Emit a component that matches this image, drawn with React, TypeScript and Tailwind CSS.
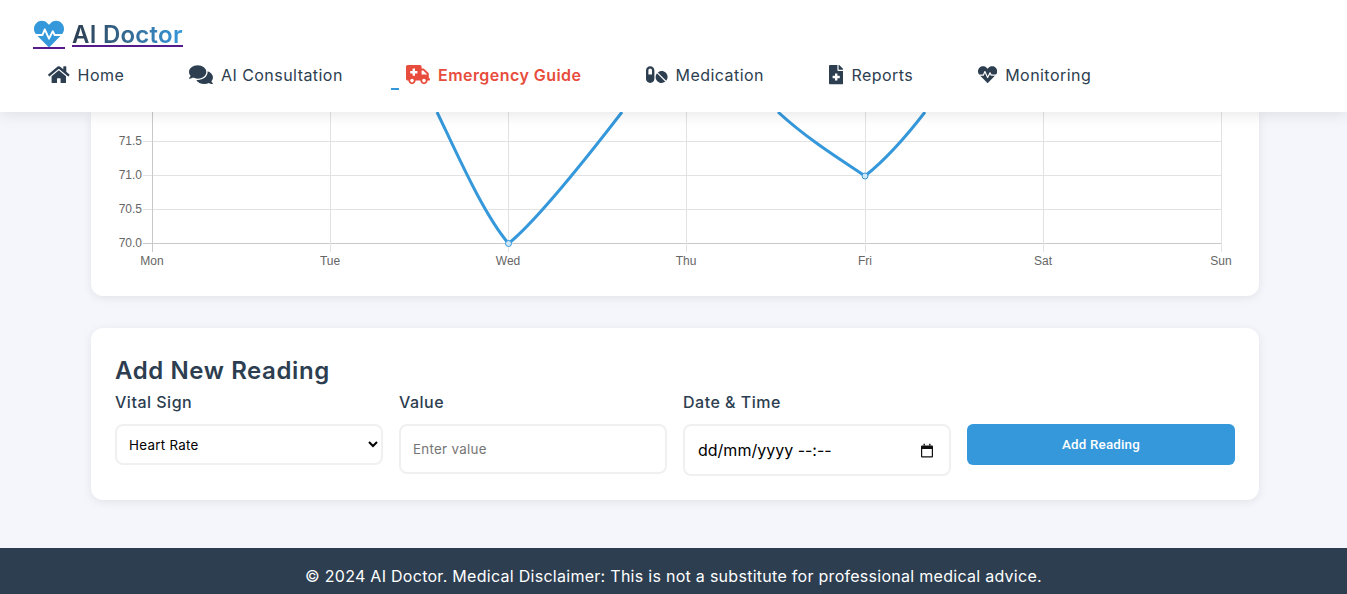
import { FaHome, FaComments, FaAmbulance, FaPills, FaFileMedical, FaHeartbeat } from "react-icons/fa";

const xs = [152.5, 330.5, 508.5, 686.5, 865.5, 1043.5, 1221.5];
const days = ["Mon", "Tue", "Wed", "Thu", "Fri", "Sat", "Sun"];
const ys = [
  { y: 141.5, l: "71.5" },
  { y: 175.5, l: "71.0" },
  { y: 209.5, l: "70.5" },
  { y: 243.5, l: "70.0" },
];

function Chart() {
  return (
    <svg width="1168" height="184" viewBox="91 112 1168 184" className="block">
      {ys.map((t) => (
        <g key={t.y}>
          <line x1="143" x2="1222" y1={t.y} y2={t.y} stroke={t.y === 243.5 ? "#c9c9c9" : "#e2e2e2"} />
          <text x="142" y={t.y + 3} textAnchor="end" fontSize="12" fill="#666" fontFamily="Liberation Sans, Arial, sans-serif">
            {t.l}
          </text>
        </g>
      ))}
      {xs.map((x, i) => (
        <g key={x}>
          <line x1={x} x2={x} y1="112" y2="252" stroke={i === 0 ? "#c9c9c9" : "#e2e2e2"} />
          <text x={Math.floor(x)} y="265" textAnchor="middle" fontSize="12" fill="#666" fontFamily="Liberation Sans, Arial, sans-serif">
            {days[i]}
          </text>
        </g>
      ))}
      <path
        d="M437 112 C458 156 484 215 508.5 243.5 C535 222 585 160 622 112"
        fill="none"
        stroke="#3498db"
        strokeWidth="3"
      />
      <path
        d="M778 112 C806 138 838 158 865 176 C885 160 905 138 925 112"
        fill="none"
        stroke="#3498db"
        strokeWidth="3"
      />
      <circle cx="508.5" cy="243.5" r="3" fill="#cfe6f6" stroke="#3498db" />
      <circle cx="865" cy="176" r="3" fill="#cfe6f6" stroke="#3498db" />
    </svg>
  );
}

const nav = [
  { label: "Home", Icon: FaHome, w: "w-[107px]", color: "text-[#2c3e50]", icon: "w-[21.6px] h-[19.2px]", font: "font-normal" },
  { label: "AI Consultation", Icon: FaComments, w: "w-[183px]", color: "text-[#2c3e50]", icon: "w-[24px] h-[21.3px]", font: "font-normal" },
  { label: "Emergency Guide", Icon: FaAmbulance, w: "w-[206px]", color: "text-[#e74c3c]", icon: "w-[24px] h-[19.2px]", font: "font-semibold", active: true },
  { label: "Medication", Icon: FaPills, w: "w-[149px]", color: "text-[#2c3e50]", icon: "w-[21.6px] h-[19.2px]", font: "font-normal" },
  { label: "Reports", Icon: FaFileMedical, w: "w-[115px]", color: "text-[#2c3e50]", icon: "w-[14.4px] h-[19.2px]", font: "font-normal" },
  { label: "Monitoring", Icon: FaHeartbeat, w: "w-[144px]", color: "text-[#2c3e50]", icon: "w-[19.2px] h-[19.2px]", font: "font-normal" },
];

const field = "w-full bg-white border-2 border-[#f0f0f0] rounded-lg text-black";
const labelCls = "block text-[16px] leading-[24px] font-medium tracking-[0.5px] mb-[10px] mt-[1px]";

export default function App() {
  return (
    <div className="h-[594px] w-full overflow-hidden bg-[#f4f6fb] flex flex-col font-['Inter',sans-serif] text-[#2c3e50]">
      <header className="relative z-10 h-[112px] shrink-0 bg-white pl-[33px] pt-[16px] shadow-[0_2px_15px_rgba(0,0,0,0.1)]">
        <a className="flex items-start h-[36px] w-fit text-[24px] font-semibold">
          <span className="border-b-2 border-[#551a8b] h-[33px] w-[32px] flex items-start justify-center">
            <FaHeartbeat className="text-[#3498db] text-[30px] shrink-0 mt-[3px]" />
          </span>
          <span className="ml-[7px] h-[31px] leading-[38px] tracking-[0.25px] border-b-2 border-[#551a8b] bg-linear-to-r from-[#2c3e50] to-[#3498db] bg-clip-text text-transparent">
            AI Doctor
          </span>
        </a>
        <nav className="mt-[5px] flex gap-[34px]">
          {nav.map(({ label, Icon, w, color, icon, font, active }) => (
            <div key={label} className={`relative flex items-center h-[34px] pl-[15px] text-[16px] ${w} ${color} ${font}`}>
              <Icon className={`mr-[8px] mt-[2px] shrink-0 ${icon}`} />
              <span className="whitespace-nowrap tracking-[0.45px] mt-[1px]">{label}</span>
              {active && <span className="absolute left-0 top-[31px] h-[2px] w-[8px] bg-[#3498db]" />}
            </div>
          ))}
        </nav>
      </header>
      <main className="flex-1 min-h-0 pl-[91px] pr-[88px] flex flex-col gap-[32px]">
        <section className="bg-white rounded-b-xl h-[184px] shadow-[0_2px_10px_rgba(0,0,0,0.08)]">
          <Chart />
        </section>
        <section className="bg-white rounded-xl h-[172px] px-[24px] pt-[25px] shadow-[0_2px_10px_rgba(0,0,0,0.08)]">
          <h2 className="text-[24px] leading-[36px] font-semibold tracking-[0.6px]">Add New Reading</h2>
          <div className="grid grid-cols-4 gap-[16px] items-start">
            <div>
              <label className={labelCls}>Vital Sign</label>
              <select className={`${field} h-[41px] px-[8px] text-[13.33px] tracking-[0.3px]`} defaultValue="Heart Rate">
                <option>Heart Rate</option>
              </select>
            </div>
            <div>
              <label className={labelCls}>Value</label>
              <input placeholder="Enter value" className={`${field} h-[50px] px-[12px] text-[13.33px] tracking-[0.3px] placeholder:text-[#757575]`} />
            </div>
            <div>
              <label className={labelCls}>Date &amp; Time</label>
              <div className={`${field} h-[52px] pl-[13px] pr-[15px] flex items-center justify-between text-[16px]`}>
                <span className="whitespace-nowrap">dd/mm/yyyy --:--</span>
                <svg width="14" height="15" viewBox="0 0 14 15" className="shrink-0">
                  <path d="M1 3.5 a1 1 0 0 1 1-1 h10 a1 1 0 0 1 1 1 v10 a1 1 0 0 1-1 1 h-10 a1 1 0 0 1-1-1 z M2.2 6 v7.3 h9.6 V6 z M3.5 0.8 h1.4 v2 h-1.4 z M9.1 0.8 h1.4 v2 h-1.4 z" fill="#111" fillRule="evenodd" />
                </svg>
              </div>
            </div>
            <div className="pt-[35px]">
              <button className="w-full h-[41px] bg-[#3498db] text-white rounded-md text-[13.33px] tracking-[0.2px] font-medium font-['Roboto',sans-serif]">
                Add Reading
              </button>
            </div>
          </div>
        </section>
      </main>
      <footer className="h-[46px] shrink-0 bg-[#2c3e50] text-white text-center text-[16px] tracking-[0.28px] pt-[16px] leading-[24px]">
        © 2024 AI Doctor. Medical Disclaimer: This is not a substitute for professional medical advice.
      </footer>
    </div>
  );
}
